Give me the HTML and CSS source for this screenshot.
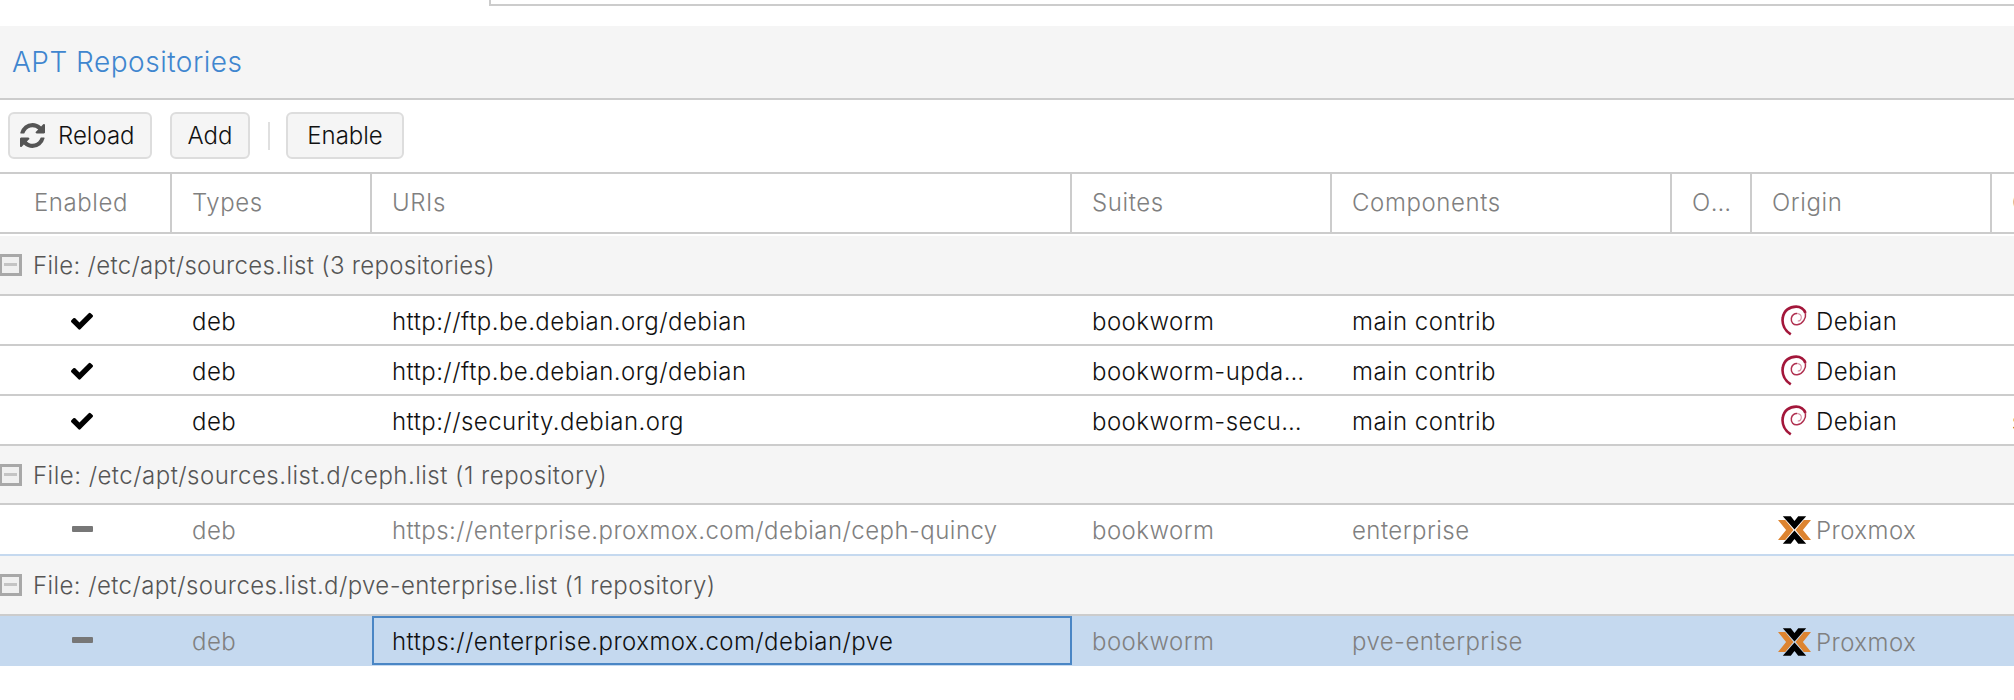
FILE: index.html
```html
<!DOCTYPE html>
<html lang="en">
<head>
<meta charset="utf-8">
<title>APT Repositories</title>
<link rel="stylesheet" href="styles.css">
</head>
<body>
<svg width="0" height="0" class="defs">
  <symbol id="ok" viewBox="121 306 1550 1216"><path d="M1671 566q0 40-28 68l-724 724-136 136q-28 28-68 28t-68-28l-136-136-362-362q-28-28-28-68t28-68l136-136q28-28 68-28t68 28l294 295 656-657q28-28 68-28t68 28l136 136q28 28 28 68z"/></symbol>
  <symbol id="deb" viewBox="0 0 24 29">
    <path d="M9 27.500C3.500 24 .5 18 1.500 12 2.500 5 8 1.500 14 1.500c4 0 7.500 2.500 8.700 6" fill="none" stroke="#a3163a" stroke-width="2.500"/>
    <path d="M22.700 7.500c.8 4.500-2.200 10-7.700 11-3.500.5-6-2.500-5.500-6 .4-3 3-4.800 5.500-4.500" fill="none" stroke="#b03050" stroke-width="1.400"/>
    <path d="M15 8c2.500.3 4 2 3.800 4-.2 1.800-1.600 3-3.300 3" fill="none" stroke="#d48ba0" stroke-width="1"/>
  </symbol>
  <symbol id="pmx" viewBox="0 0 31 26">
    <polygon fill="#dd8430" points="0,3.500 6.800,3.500 14.500,13 6.800,22.500 0,22.500 7.600,13"/>
    <polygon fill="#dd8430" points="31,3.500 24.200,3.500 16.500,13 24.200,22.500 31,22.500 23.400,13"/>
    <polygon fill="#000" points="4.500,0 12,0 15.500,4.500 19,0 26.500,0 15.500,12.500"/>
    <polygon fill="#000" points="4.500,26 12,26 15.500,21.500 19,26 26.500,26 15.500,13.500"/>
  </symbol>
  <symbol id="rf" viewBox="0 0 1536 1536"><path d="M1511 928q0 5-1 7-64 268-268 434.500t-478 166.500q-146 0-282.500-55t-243.500-157l-129 129q-19 19-45 19t-45-19-19-45v-448q0-26 19-45t45-19h448q26 0 45 19t19 45-19 45l-137 137q71 66 161 102t187 36q134 0 250-65t186-179q11-17 53-117 8-23 30-23h192q13 0 22.500 9.500t9.500 22.500zm25-800v448q0 26-19 45t-45 19h-448q-26 0-45-19t-19-45 19-45l138-138q-148-137-349-137-134 0-250 65t-186 179q-11 17-53 117-8 23-30 23h-199q-13 0-22.500-9.500t-9.500-22.500v-7q65-268 270-434.500t480-166.500q146 0 284 55.500t245 156.500l130-129q19-19 45-19t45 19 19 45z"/></symbol>
</svg>

<div class="topbox"></div>
<h1 class="title">APT Repositories</h1>
<div class="toolbar">
  <button class="btn btn-reload"><svg class="ico-rf"><use href="#rf"/></svg>Reload</button>
  <button class="btn btn-add">Add</button>
  <span class="sep"></span>
  <button class="btn btn-enable">Enable</button>
</div>

<div class="row head">
  <div class="cell center">Enabled</div>
  <div class="cell">Types</div>
  <div class="cell">URIs</div>
  <div class="cell">Suites</div>
  <div class="cell">Components</div>
  <div class="cell">Options</div>
  <div class="cell">Origin</div>
  <div class="cell">Comment</div>
</div>
<div class="spacer"></div>

<div class="group"><span class="tree"></span>File: /etc/apt/sources.list (3 repositories)</div>
<div class="row item">
  <div class="cell center"><svg class="ico-ok"><use href="#ok"/></svg></div>
  <div class="cell">deb</div>
  <div class="cell">http://ftp.be.debian.org/debian</div>
  <div class="cell">bookworm</div>
  <div class="cell">main contrib</div>
  <div class="cell"></div>
  <div class="cell origin"><span class="logo"><svg class="ico-deb"><use href="#deb"/></svg></span>Debian</div>
  <div class="cell"></div>
</div>
<div class="row item">
  <div class="cell center"><svg class="ico-ok"><use href="#ok"/></svg></div>
  <div class="cell">deb</div>
  <div class="cell">http://ftp.be.debian.org/debian</div>
  <div class="cell suite">bookworm-updates</div>
  <div class="cell">main contrib</div>
  <div class="cell"></div>
  <div class="cell origin"><span class="logo"><svg class="ico-deb"><use href="#deb"/></svg></span>Debian</div>
  <div class="cell"></div>
</div>
<div class="row item">
  <div class="cell center"><svg class="ico-ok"><use href="#ok"/></svg></div>
  <div class="cell">deb</div>
  <div class="cell">http://security.debian.org</div>
  <div class="cell suite">bookworm-security</div>
  <div class="cell">main contrib</div>
  <div class="cell"></div>
  <div class="cell origin"><span class="logo"><svg class="ico-deb"><use href="#deb"/></svg></span>Debian</div>
  <div class="cell">security updates</div>
</div>

<div class="group group-b"><span class="tree"></span>File: /etc/apt/sources.list.d/ceph.list (1 repository)</div>
<div class="row item off last-blue">
  <div class="cell center"><span class="dash"></span></div>
  <div class="cell">deb</div>
  <div class="cell">https://enterprise.proxmox.com/debian/ceph-quincy</div>
  <div class="cell">bookworm</div>
  <div class="cell">enterprise</div>
  <div class="cell"></div>
  <div class="cell origin"><span class="logo"><svg class="ico-pmx"><use href="#pmx"/></svg></span>Proxmox</div>
  <div class="cell"></div>
</div>

<div class="group group-c"><span class="tree"></span>File: /etc/apt/sources.list.d/pve-enterprise.list (1 repository)</div>
<div class="row item off selected">
  <div class="cell center"><span class="dash"></span></div>
  <div class="cell">deb</div>
  <div class="cell focus">https://enterprise.proxmox.com/debian/pve</div>
  <div class="cell">bookworm</div>
  <div class="cell">pve-enterprise</div>
  <div class="cell"></div>
  <div class="cell origin"><span class="logo"><svg class="ico-pmx"><use href="#pmx"/></svg></span>Proxmox</div>
  <div class="cell"></div>
</div>
</body>
</html>
```
FILE: styles.css
```css
* { box-sizing: border-box; }
html, body { margin: 0; padding: 0; }
body {
  width: 2014px;
  height: 700px;
  overflow: hidden;
  background: #fff;
  color: #111;
  font-family: Inter, "Liberation Sans", sans-serif;
  font-weight: 300;
  font-size: 24px;
  letter-spacing: 0.45px;
}
.defs { position: absolute; }

.topbox {
  height: 6px;
  margin: 0 0 20px 489px;
  border-left: 2px solid #ccc;
  border-bottom: 2px solid #ccc;
}
.title {
  margin: 0;
  height: 74px;
  padding: 0 0 1px 12px;
  display: flex;
  align-items: center;
  background: #f5f5f5;
  border-bottom: 2px solid #ccc;
  color: #3f86cf;
  font-size: 28px;
  font-weight: 300;
  letter-spacing: 0.5px;
}
.toolbar {
  height: 74px;
  padding: 12px 0 0 8px;
  display: flex;
  align-items: flex-start;
  border-bottom: 2px solid #ccc;
}
.btn {
  height: 47px;
  padding: 0;
  display: flex;
  align-items: center;
  justify-content: center;
  background: #f5f5f5;
  border: 2px solid #ddd;
  border-radius: 6px;
  color: #111;
  font: inherit;
  letter-spacing: 0;
}
.btn-reload { width: 144px; margin-right: 18px; padding-left: 10px; justify-content: flex-start; }
.btn-add { width: 80px; margin-right: 18px; }
.btn-enable { width: 118px; margin-left: 16px; }
.ico-rf { width: 25px; height: 25px; margin-right: 13px; fill: #555; }
.sep { width: 2px; height: 28px; margin-top: 10px; background: #e0e0e0; }

.row {
  display: grid;
  grid-template-columns: 172px 200px 700px 260px 340px 80px 240px 1fr;
  align-items: stretch;
}
.cell {
  min-width: 0;
  padding: 0 20px;
  display: block;
  white-space: nowrap;
  overflow: hidden;
  text-overflow: ellipsis;
}
.center { padding: 0 8px 0 0; text-align: center; }
.suite { padding-right: 25px; }

.head { height: 60px; border-bottom: 2px solid #ccc; color: #808080; letter-spacing: 0.6px; }
.head .cell { line-height: 58px; border-right: 2px solid #ccc; }
.head .cell:last-child { border-right: 0; padding-right: 0; }
.spacer { height: 2px; }

.group {
  height: 60px;
  display: flex;
  align-items: center;
  background: #f5f5f5;
  border-bottom: 2px solid #ccc;
  color: #555;
  letter-spacing: 0.3px;
}
.group-b { height: 59px; padding-top: 1px; letter-spacing: 0.48px; }
.group-c { letter-spacing: 0.4px; }
.tree {
  position: relative;
  width: 22px;
  height: 22px;
  margin-right: 11px;
  background: #f0f0f0;
  border: 3px solid #a8a8a8;
  border-left-width: 2px;
}
.tree::after {
  content: "";
  position: absolute;
  left: 2px;
  right: 2px;
  top: 6px;
  height: 3px;
  background: #c4c4c4;
}

.item { height: 50px; border-bottom: 2px solid #ccc; }
.item .cell { line-height: 52px; }
.item .center { display: flex; align-items: center; justify-content: center; }
.ico-ok { width: 22px; height: 18px; margin-top: 2px; fill: #000; }
.dash { width: 21px; height: 6px; margin-top: -2px; border-radius: 1px; background: #777; }

.origin { display: flex; align-items: center; padding-left: 27px; padding-top: 3px; }
.logo { width: 37px; flex: none; display: flex; align-items: center; }
.ico-deb { width: 26px; height: 31px; margin-left: 2px; margin-top: -2px; }
.ico-pmx { width: 33px; height: 28px; margin-left: -1px; margin-right: -2px; margin-top: -2px; }

.off { color: #808080; }
.last-blue { height: 51px; border-bottom-color: #c5d9ef; }
.selected { height: 50px; background: #c5d9ef; border-bottom: 0; }
.selected .cell { line-height: 52px; }
.selected .focus {
  line-height: 47px;
  color: #111;
  border: 2px solid #4a86c5;
  padding-left: 18px;
  height: 49px;
}
```
